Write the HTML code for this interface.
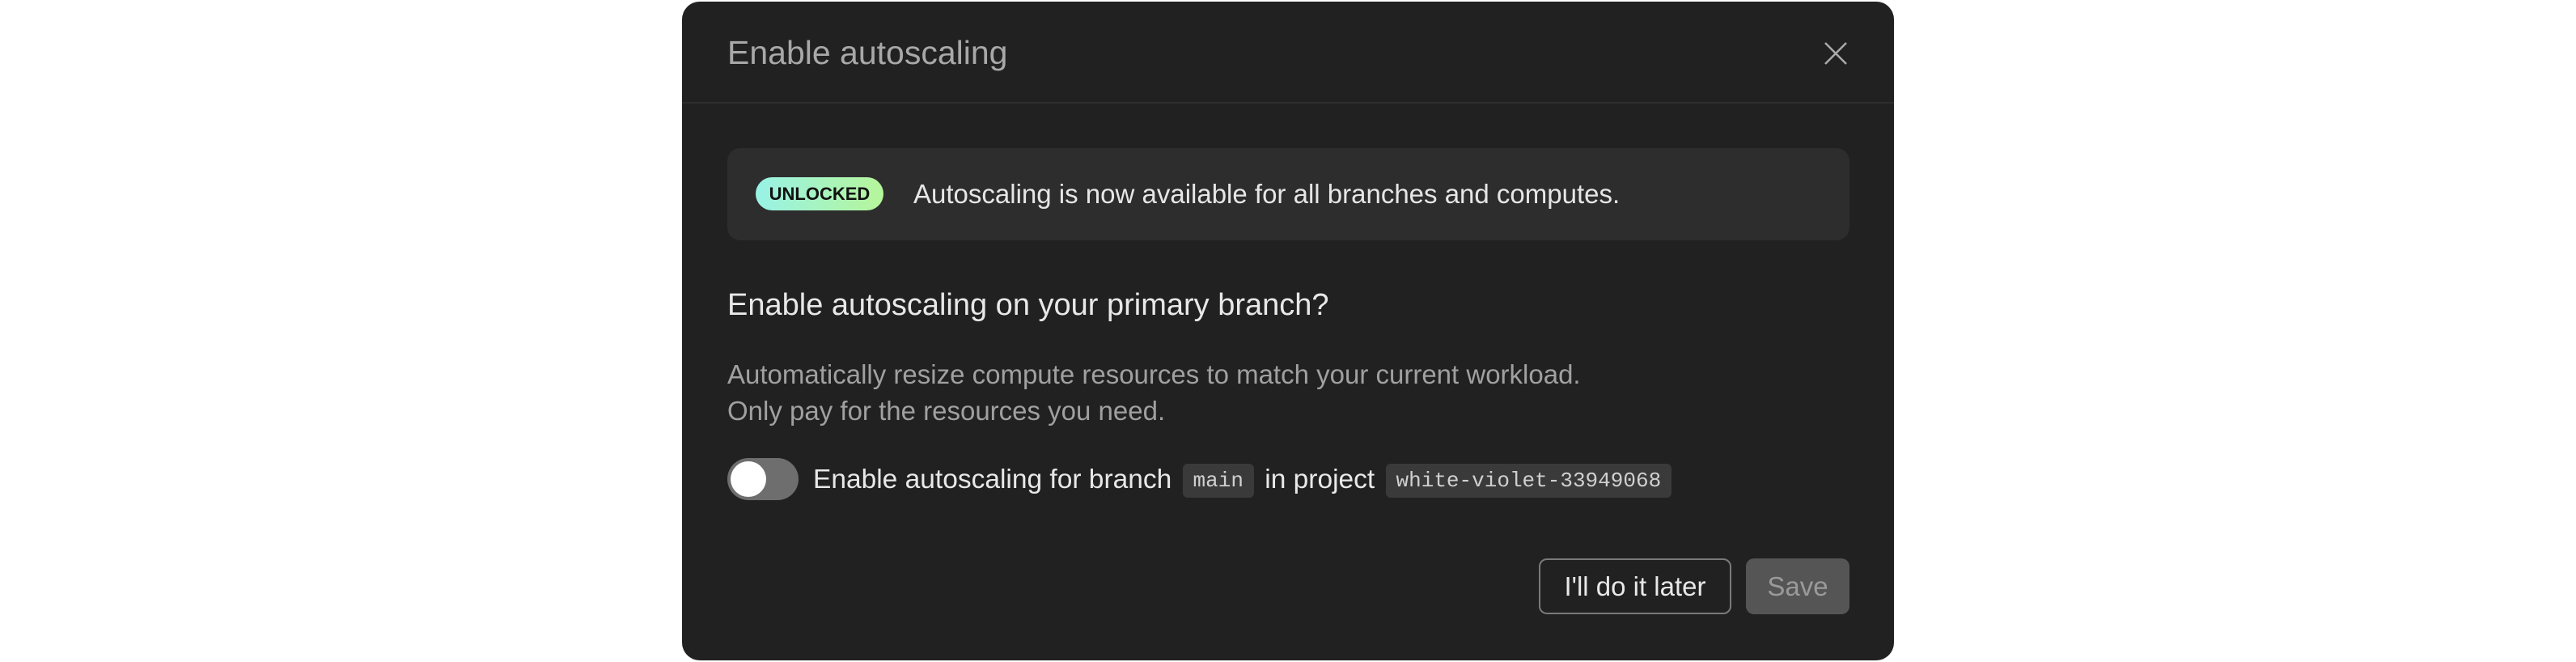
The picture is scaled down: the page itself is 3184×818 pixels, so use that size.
<!DOCTYPE html>
<html><head><style>
*{margin:0;padding:0;box-sizing:border-box}
body{width:3184px;height:818px;background:#fff;position:relative;overflow:hidden;font-family:"Liberation Sans",sans-serif}
.m{position:absolute;left:843px;top:2px;width:1498px;height:814px;background:#212121;border-radius:22px}
.a{position:absolute;white-space:nowrap}
.code{display:inline-block;background:#3a3a3a;border-radius:6px;font-family:"Liberation Mono",monospace;font-size:26px;line-height:30px;color:#d0d0d0;padding:6px 13px;vertical-align:middle;margin:0 4px}
</style></head><body>
<div class="m">
 <div class="a" style="left:56px;top:40px;font-size:41px;color:#a8a8a8">Enable autoscaling</div>
 <svg class="a" style="left:1411px;top:49px" width="30" height="30" viewBox="0 0 30 30"><path d="M2 2L28 28M28 2L2 28" stroke="#aaa" stroke-width="2.5"/></svg>
 <div class="a" style="left:0;top:124px;width:1498px;height:2px;background:#2e2e2e"></div>
 <div class="a" style="left:56px;top:181px;width:1387px;height:114px;background:#2d2d2d;border-radius:16px"></div>
 <div class="a" style="left:91px;top:217px;width:158px;height:41px;border-radius:21px;background:linear-gradient(90deg,#98f2e6,#b6f59a);color:#111;font-weight:bold;font-size:22px;line-height:41px;text-align:center">UNLOCKED</div>
 <div class="a" style="left:286px;top:219px;font-size:33px;color:#e6e6e6">Autoscaling is now available for all branches and computes.</div>
 <div class="a" style="left:56px;top:354px;font-size:38px;color:#e8e8e8">Enable autoscaling on your primary branch?</div>
 <div class="a" style="left:56px;top:438px;font-size:33px;color:#a0a0a0;line-height:45px">Automatically resize compute resources to match your current workload.<br>Only pay for the resources you need.</div>
 <div class="a" style="left:56px;top:564px;width:88px;height:52px;border-radius:26px;background:#6e6e6e"></div>
 <div class="a" style="left:60px;top:568px;width:44px;height:44px;border-radius:22px;background:#fff"></div>
 <div class="a" style="left:162px;top:567px;font-size:33.5px;color:#e8e8e8;line-height:48px">Enable autoscaling for branch <span class="code">main</span> in project <span class="code">white-violet-33949068</span></div>
 <div class="a" style="left:1059px;top:688px;width:238px;height:69px;border:2px solid #7a7a7a;border-radius:10px;color:#e8e8e8;font-size:33px;line-height:65px;text-align:center">I'll do it later</div>
 <div class="a" style="left:1315px;top:688px;width:128px;height:69px;background:#555;border-radius:10px;color:#9a9a9a;font-size:33px;line-height:69px;text-align:center">Save</div>
</div>
</body></html>
